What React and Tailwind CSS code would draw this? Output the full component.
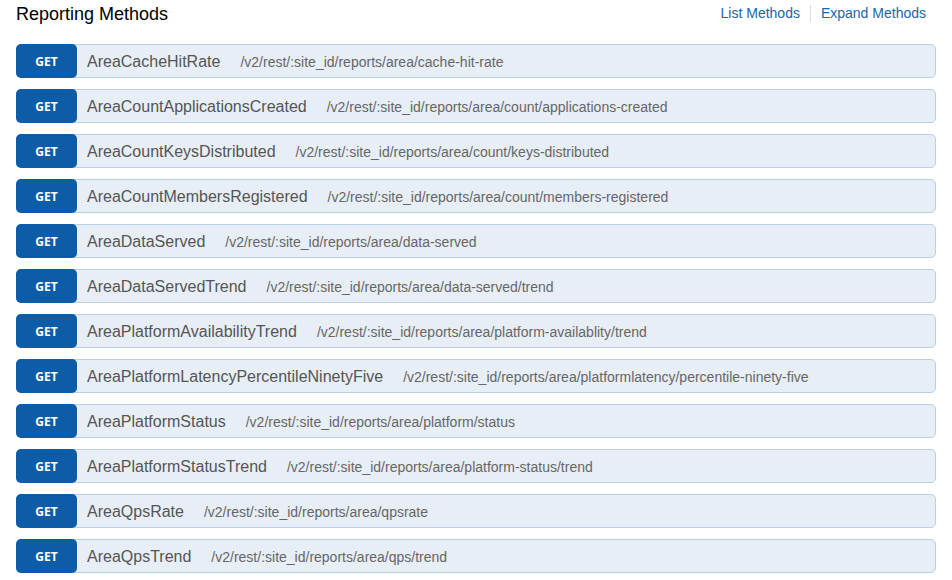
import React from "react";

const methods = [
  ["AreaCacheHitRate", "/v2/rest/:site_id/reports/area/cache-hit-rate"],
  ["AreaCountApplicationsCreated", "/v2/rest/:site_id/reports/area/count/applications-created"],
  ["AreaCountKeysDistributed", "/v2/rest/:site_id/reports/area/count/keys-distributed"],
  ["AreaCountMembersRegistered", "/v2/rest/:site_id/reports/area/count/members-registered"],
  ["AreaDataServed", "/v2/rest/:site_id/reports/area/data-served"],
  ["AreaDataServedTrend", "/v2/rest/:site_id/reports/area/data-served/trend"],
  ["AreaPlatformAvailabilityTrend", "/v2/rest/:site_id/reports/area/platform-availablity/trend"],
  ["AreaPlatformLatencyPercentileNinetyFive", "/v2/rest/:site_id/reports/area/platformlatency/percentile-ninety-five"],
  ["AreaPlatformStatus", "/v2/rest/:site_id/reports/area/platform/status"],
  ["AreaPlatformStatusTrend", "/v2/rest/:site_id/reports/area/platform-status/trend"],
  ["AreaQpsRate", "/v2/rest/:site_id/reports/area/qpsrate"],
  ["AreaQpsTrend", "/v2/rest/:site_id/reports/area/qps/trend"],
];

function App() {
  return (
    <div
      className="w-[952px] h-[580px] bg-white px-4 overflow-hidden"
      style={{ fontFamily: '"Liberation Sans", Arial, sans-serif' }}
    >
      <div className="flex items-center justify-between h-[28px]">
        <h2 className="text-[18px] text-black leading-none">Reporting Methods</h2>
        <div className="flex items-center text-[14px] text-[#1b66a8] mr-[10px] -mt-[1px]">
          <span className="pr-[10px]">List Methods</span>
          <span className="w-px h-[17px] bg-[#dddddd]"></span>
          <span className="pl-[10px]">Expand Methods</span>
        </div>
      </div>
      <div className="flex flex-col gap-[11px] mt-[16px]">
        {methods.map(([name, path], index) => (
          <div
            key={index}
            className="flex items-center h-[34px] rounded-[5px] border border-[#b8d0e6] bg-[#e7eef6]"
          >
            <div
              className="flex items-center justify-center w-[61px] h-[34px] -ml-px pt-[1px] rounded-[5px] bg-[#0c5ca8] text-white text-[12px] font-bold"
              style={{ fontFamily: '"Open Sans", "DejaVu Sans", sans-serif' }}
            >
              GET
            </div>
            <span className="ml-[10px] pt-[2px] text-[16px] text-[#555555]">{name}</span>
            <span className="ml-[20px] pt-[2px] text-[14px] text-[#666666]">{path}</span>
          </div>
        ))}
      </div>
    </div>
  );
}

export default App;
